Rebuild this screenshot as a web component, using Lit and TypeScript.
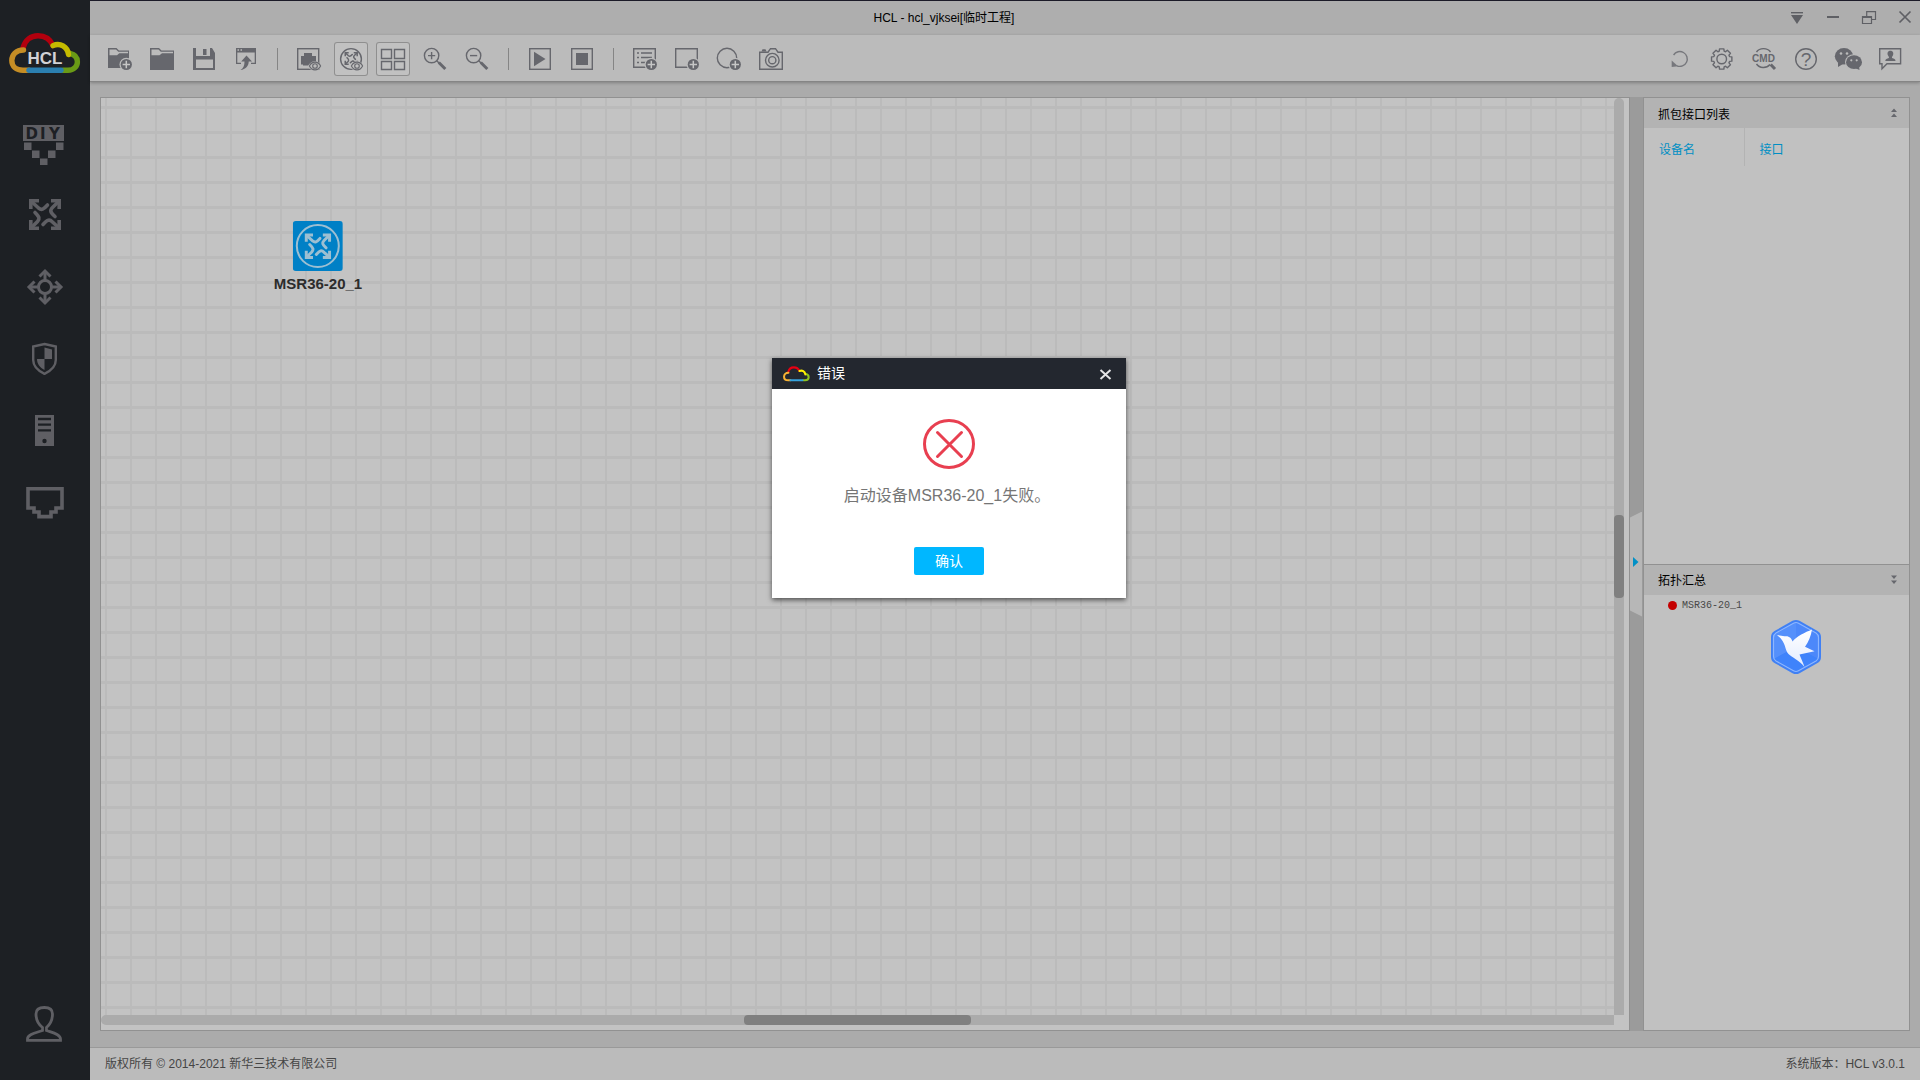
import { LitElement, html, svg, css } from "lit";
import { customElement, property, state } from "lit/decorators.js";

/* ---------- shared glyph pieces ---------- */

const routerArrows = svg`
  <g fill="none" stroke="currentColor" stroke-width="3.6">
    <path d="M1.8 10V1.8H10M22 1.8H30.2V10M30.2 21V29.2H22M10 29.2H1.8V21" />
    <path stroke-linecap="round" d="M3 3L9.5 9C12.5 11.5 14.5 10.5 18.5 6" />
    <path stroke-linecap="round" d="M29 3L23.5 8.5C20.5 11.5 21.5 13.5 26 17.5" />
    <path stroke-linecap="round" d="M29 28L23.5 23C20.5 20 18.5 20.5 14 25.5" />
    <path stroke-linecap="round" d="M3 28L8.5 22.5C11 19.5 10.5 18 6 13.5" />
  </g>`;

const cloud = svg`
  <g fill="none" stroke-width="5.4" stroke-linecap="round">
    <path stroke="var(--cloud-red)" d="M14 15C16 7 22 2.8 29 2.8C36 2.8 41 6 44 12.5" />
    <path stroke="var(--cloud-orange)" d="M14.5 17C7 17 2.8 22 2.8 27.5S7 37.2 14 37.2H20" />
    <path stroke="var(--cloud-green)" d="M61 20.5C66 21.5 68.4 25 68.4 29S65 37.2 59 37.2H54" />
    <path stroke="var(--cloud-blue)" d="M20 37.2H52" />
    <path stroke="var(--cloud-yellow)" d="M44 12.6C51 9.5 58.5 13.5 59.5 21.5" />
  </g>`;

const badge = svg`
  <circle class="halo" cx="23.3" cy="22.5" r="6.8" />
  <circle cx="23.3" cy="22.5" r="5.6" fill="currentColor" />
  <path class="light" d="M23.3 18.8V26.2M19.6 22.5H27" />`;

const eye = svg`
  <path class="halo" d="M16 24C19 17.5 26.5 17.5 30 24C26.5 30.5 19 30.5 16 24Z" />
  <path class="thin" d="M17.4 24C20 18.8 26 18.8 28.6 24C26 29.2 20 29.2 17.4 24Z" />
  <circle class="thin" cx="23" cy="24" r="2.3" />`;

const gearPath = (() => {
  const pts: string[] = [];
  for (let i = 0; i < 8; i++) {
    const a = (i * Math.PI) / 4;
    for (const [d, r] of [[-0.3, 8.2], [-0.21, 10.4], [0.21, 10.4], [0.3, 8.2]]) {
      pts.push(`${(16.7 + r * Math.sin(a + d)).toFixed(2)} ${(17 - r * Math.cos(a + d)).toFixed(2)}`);
    }
  }
  return `M${pts.join("L")}Z`;
})();

/* ---------- toolbar glyphs, drawn on a 34 x 34 grid ---------- */

const toolGlyphs: Record<string, unknown> = {
  newProject: svg`
    <path fill="currentColor" fill-rule="evenodd" d="M5 6H13.5L16 8.5H26V26H5ZM6.5 7.5V13.3H14L16.3 11.3H25V9.8H15.3L13 7.5Z" />
    ${badge}`,
  open: svg`<path fill="currentColor" fill-rule="evenodd" d="M5 6H14L16.5 8.5H29V28H5ZM6.5 7.5V13.3H14.5L17 11.3H28V9.8H15.8L13.5 7.5Z" />`,
  save: svg`<path fill="currentColor" fill-rule="evenodd" d="M6 6H9V14H25V6L28 11V28H6ZM9 17.5V26H26V17.5ZM16 7H19.5V13H16ZM23 6H25V14H23Z" />`,
  exportWin: svg`
    <path fill="currentColor" fill-rule="evenodd" d="M7 6H27V22H22V20.8H25.7V10.5H8.3V20.8H12V22H7ZM8.5 7.2V8.8H10V7.2ZM11.5 7.2V8.8H13V7.2Z" />
    <path fill="currentColor" d="M17.5 13.5L23 19.5H19.7C19.7 24 16.5 27.5 11.5 28C14.5 26 15.5 23.5 15.5 19.5H12.2Z" />`,
  showPort: svg`
    <rect class="line" x="5.7" y="6.7" width="21" height="20.6" />
    <path fill="currentColor" d="M12 11H20V14H24V22.5H21V23.5H11V22.5H9V14H12Z" />
    ${eye}`,
  showDevice: svg`
    <circle class="line" cx="17" cy="17" r="10.4" />
    <g transform="translate(10.5 10) scale(.42)">${routerArrows}</g>
    ${eye}`,
  grid: svg`<path class="line" d="M5.5 7.5H15.5V16.5H5.5ZM18.5 7.5H28.5V16.5H18.5ZM5.5 19.5H15.5V27.5H5.5ZM18.5 19.5H28.5V27.5H18.5Z" />`,
  zoomIn: svg`
    <circle class="line" cx="13.6" cy="13.6" r="7.2" />
    <path class="line" d="M13.6 10V17.2M10 13.6H17.2" />
    <path class="line" d="M18.5 18.5L21 21" /><path class="fat" d="M20.8 20.5L27.3 27" />`,
  zoomOut: svg`
    <circle class="line" cx="13.6" cy="13.6" r="7.2" />
    <path class="line" d="M10 13.6H17.2" />
    <path class="line" d="M18.5 18.5L21 21" /><path class="fat" d="M20.8 20.5L27.3 27" />`,
  play: svg`<rect class="line" x="6.7" y="6.7" width="20.6" height="20.6" /><path fill="currentColor" d="M11 9.7L22.5 17L11 24.3Z" />`,
  stop: svg`<rect class="line" x="6.7" y="6.7" width="20.6" height="20.6" /><path fill="currentColor" d="M11 11H23V23H11Z" />`,
  addList: svg`
    <path class="line" d="M5.7 6.7H27.3V25.3H5.7Z" />
    <path class="line" d="M9 11H11M13 11H24M9 15.5H11M13 15.5H24M9 20.5H11M13 20.5H18" />
    ${badge}`,
  addRect: svg`<path class="line" d="M5.7 6.7H27.3V25.3H5.7Z" />${badge}`,
  addCircle: svg`<circle class="line" cx="15" cy="16" r="9.7" />${badge}`,
  camera: svg`
    <path class="line" d="M5.7 10.2H14L16.5 6.7H21.5L24 10.2H28.3V27.3H5.7Z" />
    <path fill="currentColor" d="M7.5 9.5L8.5 7.3H11.5L12.5 9.5Z" />
    <circle class="line" cx="18.3" cy="18.2" r="6.8" /><circle class="line" cx="18.3" cy="18.2" r="3.6" />`,
  refresh: svg`
    <g opacity=".8">
      <path class="line" d="M10.6 13A7.4 7.4 0 1 1 14 23.8" />
      <path fill="currentColor" d="M8.7 18.5V25L15 24.3Z" />
    </g>`,
  gear: svg`<path class="line" stroke-linejoin="round" d=${gearPath} /><circle class="line" cx="16.7" cy="17" r="4.8" />`,
  cmd: svg`
    <path class="line" d="M9.5 10C12.5 5.5 20.5 5.5 23.5 10M9.5 22C12.5 26.5 19.5 26.5 23 22.5" />
    <path class="fat" d="M23.7 22.5L28 27" />
    <text x="16.5" y="20" text-anchor="middle" class="cmd">CMD</text>`,
  help: svg`<circle class="line" cx="17" cy="17" r="10.3" /><text x="17" y="24" text-anchor="middle" class="help">?</text>`,
  wechat: svg`
    <ellipse cx="13" cy="14.3" rx="9.2" ry="8.3" fill="currentColor" /><path fill="currentColor" d="M7 20L7 25L12 22Z" />
    <circle class="hole" cx="10" cy="11.5" r="1.3" /><circle class="hole" cx="16" cy="11.5" r="1.3" />
    <ellipse class="halo" cx="23" cy="20" rx="9" ry="7.8" />
    <ellipse cx="23" cy="20.2" rx="8" ry="6.9" fill="currentColor" /><path fill="currentColor" d="M24 26L28.5 28L28 24Z" />
    <circle class="hole" cx="20.3" cy="18.3" r="1.1" /><circle class="hole" cx="25.7" cy="18.3" r="1.1" />`,
  contact: svg`
    <path class="line" d="M6.7 6.7H27.6V21.8H14L9 26.8V21.8H6.7Z" />
    <path fill="currentColor" d="M17.4 8.8C20 8.8 20.8 11 20 13.3L19 15V16C21 16.5 22.5 17 22.5 19H12.3C12.3 17 14 16.5 15.9 16V15L14.9 13.3C14 11 14.8 8.8 17.4 8.8Z" />`,
};

/* ---------- side navigation glyphs, drawn on a 90 x 72 grid ---------- */

const navGlyphs: Record<string, unknown> = {
  diy: svg`
    <path fill="currentColor" d="M23 16H64V32H23ZM24 33.5H31.5V41H24ZM56 33.5H63.5V41H56ZM32 41.5H39.5V49H32ZM48 41.5H55.5V49H48ZM40 49.5H47.5V56H40Z" />
    <text class="diy" y="29.5"><tspan x="25.5">D</tspan><tspan x="40">I</tspan><tspan x="49">Y</tspan></text>`,
  router: svg`<g transform="translate(29 18)">${routerArrows}</g>`,
  switch: svg`
    <g fill="none" stroke="currentColor" stroke-width="3">
      <circle cx="45" cy="34" r="6.5" />
      <path d="M45 27V18M45 41V50M38 34H29M52 34H61" />
      <path d="M39.5 23.5L45 18L50.5 23.5M39.5 44.5L45 50L50.5 44.5M34.5 28.5L29 34L34.5 39.5M55.5 28.5L61 34L55.5 39.5" />
    </g>`,
  firewall: svg`
    <path fill="none" stroke="currentColor" stroke-width="2.4" d="M44.5 19L55.8 21.5V35C55.8 42 50.5 46 44.5 48.8C38.5 46 33.2 42 33.2 35V21.5Z" />
    <path fill="currentColor" d="M44.5 22.5L52 24.5V34H44.5ZM37 34H44.5V45C40 42.5 37 39 37 34Z" />`,
  server: svg`<path fill="currentColor" fill-rule="evenodd" d="M35 18H54V49H35ZM38 20.8V23.2H51V20.8ZM38 26.4V28.8H51V26.4ZM38 32.2V34.6H51V32.2ZM44.5 41.8A2.2 2.2 0 1 0 44.5 46.2A2.2 2.2 0 1 0 44.5 41.8Z" />`,
  port: svg`<path fill="none" stroke="currentColor" stroke-width="3.6" d="M28 19.7H62V39H56V43H51V47.6H39V43H34V39H28Z" />`,
  user: svg`<path fill="none" stroke="currentColor" stroke-width="2.8" d="M42.5 39.5C38 36 36 31 36 26C36 21.5 39 19.5 44.3 19.5S52.5 21.5 52.5 26C52.5 31 50.5 36 46.5 39.5V42.5C52 44.5 60.5 46 60.5 51V52.3H27.5V51C27.5 46 37 44.5 42.5 42.5Z" />`,
};

@customElement("side-nav")
export class SideNav extends LitElement {
  static styles = css`
    :host {
      display: flex;
      flex-direction: column;
      flex: none;
      width: 90px;
      background: #1d2024;
      color: #5f5f64;
    }
    .logo {
      box-sizing: border-box;
      height: 109px;
      padding: 33px 0 0 9px;
      --cloud-red: #b3000e;
      --cloud-orange: #c58d25;
      --cloud-green: #6a9a16;
      --cloud-blue: #2b7fb0;
      --cloud-yellow: #c5bb00;
    }
    .name {
      fill: #d2d2d6;
      font: bold 17px "Liberation Sans", sans-serif;
    }
    .item {
      display: block;
      width: 100%;
      height: 72px;
      padding: 0;
      border: 0;
      background: none;
      color: inherit;
    }
    .user {
      margin: auto 0 20px;
    }
    .diy {
      fill: #1d2024;
      font: bold 15px "DejaVu Sans", sans-serif;
    }
    svg {
      display: block;
    }
  `;

  private item(id: string, label: string, extra = "") {
    return html`<button class="item ${extra}" aria-label=${label}>
      <svg width="90" height="72" viewBox="0 0 90 72">${navGlyphs[id]}</svg>
    </button>`;
  }

  render() {
    return html`
      <div class="logo">
        <svg width="72" height="41" viewBox="0 0 72 41">
          ${cloud}
          <text class="name" x="36" y="31" text-anchor="middle">HCL</text>
        </svg>
      </div>
      ${this.item("diy", "DIY")} ${this.item("router", "路由器")} ${this.item("switch", "交换机")}
      ${this.item("firewall", "防火墙")} ${this.item("server", "主机")} ${this.item("port", "连线")}
      ${this.item("user", "用户", "user")}
    `;
  }
}

@customElement("title-bar")
export class TitleBar extends LitElement {
  static styles = css`
    :host {
      display: flex;
      align-items: stretch;
      height: 34px;
      border-top: 1px solid #1c1b28;
      background: #aeaeae;
      color: #5f6065;
    }
    .title {
      flex: 1;
      padding-left: 16px;
      text-align: center;
      line-height: 34px;
      color: #000;
      font-size: 12px;
      font-weight: 400;
      margin: 0;
    }
    .controls {
      display: flex;
      gap: 6px;
    }
    .control {
      width: 30px;
      padding: 0;
      border: 0;
      background: none;
      color: inherit;
    }
    svg {
      display: block;
      fill: none;
      stroke: currentColor;
      stroke-width: 1.4;
    }
  `;

  render() {
    const control = (label: string, glyph: unknown) => html`<button class="control" aria-label=${label}>
      <svg width="30" height="34" viewBox="0 0 30 34">${glyph}</svg>
    </button>`;
    return html`
      <h1 class="title">HCL - hcl_vjksei[临时工程]</h1>
      <div class="controls">
        ${control("菜单", svg`<path d="M9 11.7H21" /><path fill="currentColor" stroke="none" d="M9 14H21L15 23Z" />`)}
        ${control("最小化", svg`<path d="M9 16H21" stroke-width="2" />`)}
        ${control("还原", svg`<path d="M8.5 15.5H17.5V22.5H8.5ZM8.5 16.5H17.5M12.7 15V10.7H21.5V18.5H18" stroke-width="1.2" />`)}
        ${control("关闭", svg`<path d="M9.5 10.5L20.5 21.5M20.5 10.5L9.5 21.5" stroke-width="1.7" />`)}
      </div>
    `;
  }
}

@customElement("tool-bar")
export class ToolBar extends LitElement {
  static styles = css`
    :host {
      display: flex;
      box-sizing: border-box;
      align-items: center;
      justify-content: space-between;
      position: relative;
      height: 47px;
      padding: 2px 13px 0;
      border-bottom: 1px solid #858585;
      background: #bbbbbb;
      box-shadow: 0 1px 3px rgba(0, 0, 0, 0.25);
      color: #66676d;
    }
    .group {
      display: flex;
      align-items: center;
      gap: 8px;
    }
    .tool {
      box-sizing: border-box;
      width: 34px;
      height: 34px;
      padding: 0;
      border: 0;
      border-radius: 3px;
      background: none;
      color: inherit;
    }
    .tool.on {
      background: #c1c1c1;
      box-shadow: inset 0 0 0 1px #8f8f8f;
    }
    .rule {
      width: 1px;
      height: 22px;
      margin: 0 6px;
      background: #858585;
    }
    svg {
      display: block;
    }
    .line {
      fill: none;
      stroke: currentColor;
      stroke-width: 1.4;
    }
    .thin {
      fill: none;
      stroke: currentColor;
      stroke-width: 1.1;
    }
    .fat {
      fill: none;
      stroke: currentColor;
      stroke-width: 3;
    }
    .halo,
    .hole {
      fill: #bbbbbb;
    }
    .on .halo {
      fill: #c1c1c1;
    }
    .light {
      fill: none;
      stroke: #c6c6c6;
      stroke-width: 1.5;
    }
    .cmd {
      fill: currentColor;
      font: bold 10px "Liberation Sans", sans-serif;
    }
    .help {
      fill: currentColor;
      font: 19px "Liberation Sans", sans-serif;
    }
  `;

  private tool(id: string, label: string, on = false) {
    return html`<button class="tool ${on ? "on" : ""}" aria-label=${label}>
      <svg width="34" height="34" viewBox="0 0 34 34">${toolGlyphs[id]}</svg>
    </button>`;
  }

  render() {
    return html`
      <div class="group">
        ${this.tool("newProject", "新建工程")} ${this.tool("open", "打开工程")} ${this.tool("save", "保存工程")}
        ${this.tool("exportWin", "导出")}
        <span class="rule"></span>
        ${this.tool("showPort", "显示接口名")} ${this.tool("showDevice", "显示设备名", true)}
        ${this.tool("grid", "显示网格", true)} ${this.tool("zoomIn", "放大")} ${this.tool("zoomOut", "缩小")}
        <span class="rule"></span>
        ${this.tool("play", "全部启动")} ${this.tool("stop", "全部停止")}
        <span class="rule"></span>
        ${this.tool("addList", "添加文本")} ${this.tool("addRect", "添加矩形")}
        ${this.tool("addCircle", "添加圆形")} ${this.tool("camera", "截图")}
      </div>
      <div class="group">
        ${this.tool("refresh", "刷新")} ${this.tool("gear", "设置")} ${this.tool("cmd", "命令行")}
        ${this.tool("help", "帮助")} ${this.tool("wechat", "微信")} ${this.tool("contact", "联系我们")}
      </div>
    `;
  }
}

@customElement("topology-canvas")
export class TopologyCanvas extends LitElement {
  @property({ attribute: false }) devices = [{ name: "MSR36-20_1", x: 217, y: 148 }];
  @state() private horizontal = { start: 42.5, size: 15 };
  @state() private vertical = { start: 45.5, size: 9 };

  static styles = css`
    :host {
      display: grid;
      flex: 1;
      min-width: 0;
      grid-template: 1fr 10px / 1fr 10px;
      padding: 0 5px 5px 0;
      border: 1px solid #919191;
      background: #c3c3c3;
    }
    .sheet {
      position: relative;
      overflow: hidden;
      background-image: linear-gradient(90deg, #bbbbbb 2px, transparent 2px),
        linear-gradient(#bbbbbb 3px, transparent 3px);
      background-size: 25px 25px;
      background-position: 4px 8px;
    }
    .device {
      position: absolute;
      display: flex;
      flex-direction: column;
      align-items: center;
      gap: 4px;
      transform: translate(-50%, -25px);
      color: #9dbfd2;
    }
    .label {
      color: #2c2c2c;
      font-size: 15px;
      font-weight: 700;
      line-height: 18px;
    }
    .track {
      position: relative;
      background: #ababab;
    }
    .across {
      border-radius: 5px 0 0 5px;
    }
    .down {
      border-radius: 5px 5px 0 0;
    }
    .thumb {
      position: absolute;
      border-radius: 4px;
      background: #808080;
    }
    .across .thumb {
      height: 100%;
    }
    .down .thumb {
      width: 100%;
    }
    svg {
      display: block;
    }
  `;

  render() {
    return html`
      <div class="sheet">
        ${this.devices.map(
          (d) => html`<div class="device" style="left:${d.x}px;top:${d.y}px">
            <svg width="50" height="50" viewBox="0 0 50 50">
              <rect width="50" height="50" rx="3" fill="#0080c6" />
              <circle cx="25" cy="25" r="21" fill="none" stroke="currentColor" stroke-width="2" />
              <g transform="translate(12 12.5) scale(.82)">${routerArrows}</g>
            </svg>
            <span class="label">${d.name}</span>
          </div>`
        )}
      </div>
      <div class="track down">
        <div class="thumb" style="top:${this.vertical.start}%;height:${this.vertical.size}%"></div>
      </div>
      <div class="track across">
        <div class="thumb" style="left:${this.horizontal.start}%;width:${this.horizontal.size}%"></div>
      </div>
    `;
  }
}

@customElement("side-panel")
export class SidePanel extends LitElement {
  static styles = css`
    :host {
      display: flex;
      flex: none;
    }
    .splitter {
      display: flex;
      align-items: center;
      width: 13px;
      background: #9b9b9b;
    }
    .handle {
      width: 12px;
      height: 105px;
      padding: 0 0 4px 3px;
      border: 0;
      background: #b7b7b7;
      clip-path: polygon(0 6px, 100% 0, 100% 100%, 0 calc(100% - 6px));
      color: #0090c6;
    }
    .sections {
      display: flex;
      flex-direction: column;
      width: 265px;
      border: 1px solid #919191;
      background: #c1c1c1;
    }
    .section {
      flex: 1;
    }
    .section + .section {
      border-top: 1px solid #919191;
    }
    .head {
      display: flex;
      align-items: center;
      justify-content: space-between;
      height: 30px;
      padding: 0 10px 0 14px;
      background: #b3b3b3;
      color: #66676d;
    }
    .heading {
      margin: 0;
      color: #000;
      font-size: 12px;
      font-weight: 400;
    }
    .fold {
      width: 10px;
      height: 14px;
      padding: 0;
      border: 0;
      background: none;
      color: inherit;
    }
    .ports {
      width: 100%;
      border-collapse: collapse;
      table-layout: fixed;
    }
    .col {
      box-sizing: border-box;
      height: 38px;
      padding: 3px 0 0 15px;
      text-align: left;
      color: #008fc4;
      font-size: 12px;
      font-weight: 400;
    }
    .first {
      width: 100px;
      border-right: 1px solid #b3b3b3;
    }
    .list {
      margin: 0;
      padding: 0 24px;
      list-style: none;
    }
    .entry {
      display: flex;
      align-items: center;
      gap: 5px;
      height: 22px;
      color: #484848;
      font: 10px "Liberation Mono", monospace;
    }
    .dot {
      width: 9px;
      height: 9px;
      border-radius: 50%;
      background: #c40000;
    }
    svg {
      display: block;
      fill: currentColor;
    }
  `;

  render() {
    return html`
      <div class="splitter">
        <button class="handle" aria-label="收起面板">
          <svg width="6" height="10" viewBox="0 0 6 10"><path d="M0 0L5.5 5L0 10Z" /></svg>
        </button>
      </div>
      <div class="sections">
        <section class="section">
          <header class="head">
            <h2 class="heading">抓包接口列表</h2>
            <button class="fold" aria-label="收起">
              <svg width="10" height="14" viewBox="0 0 10 14"><path d="M2 6L5 2.5L8 6ZM2 11L5 7.5L8 11Z" /></svg>
            </button>
          </header>
          <table class="ports">
            <thead>
              <tr>
                <th class="col first" scope="col">设备名</th>
                <th class="col" scope="col">接口</th>
              </tr>
            </thead>
          </table>
        </section>
        <section class="section">
          <header class="head">
            <h2 class="heading">拓扑汇总</h2>
            <button class="fold" aria-label="展开">
              <svg width="10" height="14" viewBox="0 0 10 14"><path d="M2 2.5L5 6L8 2.5ZM2 7.5L5 11L8 7.5Z" /></svg>
            </button>
          </header>
          <ul class="list">
            <li class="entry"><span class="dot"></span>MSR36-20_1</li>
          </ul>
        </section>
      </div>
    `;
  }
}

@customElement("error-dialog")
export class ErrorDialog extends LitElement {
  @property() message = "";

  static styles = css`
    :host {
      display: block;
      width: 354px;
      background: #fff;
      box-shadow: 0 2px 5px rgba(0, 0, 0, 0.6);
    }
    .head {
      display: flex;
      align-items: center;
      height: 31px;
      padding: 0 13px 0 11px;
      background: #23272f;
      color: #fff;
      --cloud-red: #e60012;
      --cloud-orange: #f9b233;
      --cloud-green: #8fc31f;
      --cloud-blue: #36a3de;
      --cloud-yellow: #fff000;
    }
    .heading {
      flex: 1;
      margin: 0 0 0 7px;
      font-size: 14px;
      font-weight: 400;
      line-height: 31px;
    }
    .close {
      width: 16px;
      height: 16px;
      padding: 0;
      border: 0;
      background: none;
      color: #e4e4e6;
    }
    .body {
      display: flex;
      flex-direction: column;
      align-items: center;
      padding: 30px 0 23px;
    }
    .message {
      margin: 15px 0 39px;
      padding-right: 4px;
      color: #757575;
      font-size: 16px;
      line-height: 24px;
    }
    .ok {
      width: 70px;
      height: 28px;
      padding: 0 0 2px;
      border: 0;
      border-radius: 2px;
      background: #00b7ff;
      color: #fff;
      font: inherit;
      font-size: 14px;
    }
    svg {
      display: block;
    }
  `;

  render() {
    return html`
      <header class="head">
        <svg width="27" height="16" viewBox="0 0 72 41">${cloud}</svg>
        <h2 class="heading">错误</h2>
        <button class="close" aria-label="关闭">
          <svg width="16" height="16" viewBox="0 0 16 16">
            <path d="M3.5 4L13.5 13M13.5 4L3.5 13" stroke="currentColor" stroke-width="2" />
          </svg>
        </button>
      </header>
      <div class="body">
        <svg width="52" height="50" viewBox="0 0 52 50" fill="none" stroke="#e83f50" stroke-width="3" stroke-linecap="round">
          <ellipse cx="26" cy="25" rx="24.5" ry="23.5" />
          <path d="M14.5 13.5L38.5 37.5M38.5 13.5L14.5 37.5" />
        </svg>
        <p class="message">${this.message}</p>
        <button class="ok">确认</button>
      </div>
    `;
  }
}

@customElement("app-root")
export class AppRoot extends LitElement {
  static styles = css`
    :host {
      display: flex;
      position: relative;
      height: 100vh;
      overflow: hidden;
      font-family: "Liberation Sans", "Noto Sans CJK SC", sans-serif;
    }
    .column {
      display: flex;
      flex: 1;
      flex-direction: column;
      min-width: 0;
      background: #ababab;
    }
    .work {
      display: flex;
      flex: 1;
      min-height: 0;
      padding: 15px 10px 16px;
    }
    .footer {
      display: flex;
      align-items: center;
      justify-content: space-between;
      height: 32px;
      padding: 0 15px;
      border-top: 1px solid #999;
      background: #bbbbbb;
      color: #454545;
      font-size: 12px;
      line-height: 16px;
    }
    .dialog {
      position: absolute;
      left: calc(50% - 188px);
      top: calc(50% - 182px);
    }
    .bird {
      position: absolute;
      right: 98px;
      bottom: 405px;
      padding: 0;
      border: 0;
      background: none;
    }
    svg {
      display: block;
    }
  `;

  render() {
    return html`
      <side-nav></side-nav>
      <div class="column">
        <title-bar></title-bar>
        <tool-bar></tool-bar>
        <main class="work">
          <topology-canvas></topology-canvas>
          <side-panel></side-panel>
        </main>
        <footer class="footer">
          <span>版权所有 © 2014-2021 新华三技术有限公司</span>
          <span>系统版本：HCL v3.0.1</span>
        </footer>
      </div>
      <button class="bird" aria-label="悬浮窗">
        <svg width="52" height="56" viewBox="0 0 52 56">
          <defs>
            <linearGradient id="wing" x1="0" y1="0" x2="0" y2="1">
              <stop offset="0" stop-color="#fff" />
              <stop offset="1" stop-color="#e3ecff" />
            </linearGradient>
          </defs>
          <path d="M22.5 1.8Q26 0 29.5 1.8L47.5 12Q51 14 51 18V38Q51 42 47.5 44L29.5 54.2Q26 56 22.5 54.2L4.5 44Q1 42 1 38V18Q1 14 4.5 12Z" fill="#4080f4" />
          <path d="M26 3L48 16V40L26 28Z" fill="#4c88fa" />
          <path d="M26 28L4 40V16L26 3Z" fill="#5590fb" />
          <path d="M26 28L48 40L26 53L4 40Z" fill="#3f83fb" />
          <path d="M23.5 4.2Q26 2.8 28.5 4.2L46 14Q48.5 15.5 48.5 18.5V37.5Q48.5 40.5 46 42L28.5 51.8Q26 53.2 23.5 51.8L6 42Q3.5 40.5 3.5 37.5V18.5Q3.5 15.5 6 14Z" fill="none" stroke="#8db6ff" stroke-width="1.2" />
          <path d="M7 16L14.5 17.3C19 16.5 21.5 19 22.5 22.5C27 17 35 13.5 42 10.5C41 17 38.5 23 35 27.8L44.5 32.3L29.5 35.5C31 39.5 33 43.5 34.5 48C29 41 22 38.5 18.5 35C14 30.5 17 24 7 16Z" fill="url(#wing)" />
        </svg>
      </button>
      <error-dialog class="dialog" role="alertdialog" .message=${"启动设备MSR36-20_1失败。"}></error-dialog>
    `;
  }
}
